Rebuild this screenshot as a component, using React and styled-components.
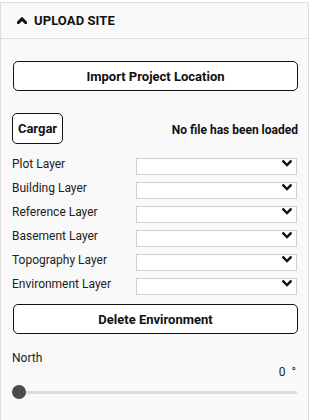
import React from 'react'
import styled, { createGlobalStyle } from 'styled-components'

const Global = createGlobalStyle`
  html, body { margin: 0; padding: 0; background: #fff; overflow: hidden; }
  body { font-family: Roboto, "Liberation Sans", Arial, sans-serif; color: #111; }
`

const layers = ['Plot Layer', 'Building Layer', 'Reference Layer', 'Basement Layer', 'Topography Layer', 'Environment Layer']

const Chevron = ({ up }) => (
  <svg width="10" height="7" viewBox="0 0 10 7">
    <path d={up ? 'M1.3 5.6 L5 1.9 L8.7 5.6' : 'M1.3 1.4 L5 5.1 L8.7 1.4'} fill="none" stroke="#111" strokeWidth={up ? 3 : 2.4} strokeLinecap="square" />
  </svg>
)

const App = () => {
  return (
    <>
      <Global />
      <Panel>
        <Header>
          <Chevron up />
          <span>UPLOAD SITE</span>
        </Header>
        <Body>
          <WideButton>Import Project Location</WideButton>
          <FileRow>
            <SmallButton>Cargar</SmallButton>
            <FileStatus>No file has been loaded</FileStatus>
          </FileRow>
          <Layers>
            {layers.map(l => (
              <LayerRow key={l}>
                <Label>{l}</Label>
                <SelectWrap>
                  <Select defaultValue="">
                    <option value=""></option>
                  </Select>
                  <Arrow><Chevron /></Arrow>
                </SelectWrap>
              </LayerRow>
            ))}
          </Layers>
          <WideButton>Delete Environment</WideButton>
          <North>
            <Label>North</Label>
            <Degrees>0 °</Degrees>
            <Slider>
              <Track />
              <Thumb />
            </Slider>
          </North>
        </Body>
      </Panel>
    </>
  )
}

export default App

const Panel = styled.div`
  margin-top: 2px;
  width: 307px;
  height: 418px;
  border: 1px solid #dedede;
  border-bottom: none;
  background: #f9f9f9;
`
const Header = styled.div`
  height: 35px;
  display: flex;
  align-items: center;
  gap: 7px;
  padding-left: 16px;
  border-bottom: 1px solid #dedede;
  font-size: 13px;
  font-weight: 700;
  letter-spacing: 0.1px;
`
const Body = styled.div`
  padding: 22px 10px 0 11px;
  display: flex;
  flex-direction: column;
`
const WideButton = styled.button`
  height: 30px;
  margin: 0 0 0 1px;
  border: 1px solid #111;
  border-radius: 5px;
  background: #fff;
  font-family: inherit;
  font-size: 13px;
  font-weight: 700;
  color: #111;
`
const FileRow = styled.div`
  display: flex;
  align-items: center;
  justify-content: space-between;
  margin-top: 22px;
`
const SmallButton = styled.button`
  width: 51px;
  height: 31px;
  padding: 0;
  border: 1px solid #111;
  border-radius: 5px;
  background: #fff;
  font-family: inherit;
  font-size: 13px;
  font-weight: 700;
  color: #111;
`
const FileStatus = styled.span`
  font-size: 12px;
  font-weight: 700;
  margin-top: 2px;
`
const Layers = styled.div`
  display: flex;
  flex-direction: column;
  gap: 7px;
  margin-top: 11px;
  margin-bottom: 12px;
`
const LayerRow = styled.div`
  display: flex;
  align-items: center;
  justify-content: space-between;
  height: 17px;
`
const Label = styled.span`
  font-size: 12px;
  color: #222;
`
const SelectWrap = styled.div`
  position: relative;
  width: 161px;
  height: 17px;
  margin-right: 1px;
`
const Select = styled.select`
  appearance: none;
  width: 100%;
  height: 100%;
  margin: 0;
  border: 1px solid #cfcfcf;
  border-radius: 0;
  background: #fff;
  font-family: inherit;
  font-size: 12px;
`
const Arrow = styled.span`
  position: absolute;
  right: 5px;
  top: 5px;
  display: flex;
  pointer-events: none;
`
const North = styled.div`
  display: flex;
  flex-direction: column;
  margin-top: 17px;
`
const Degrees = styled.span`
  align-self: flex-end;
  margin-right: 2px;
  font-size: 12px;
  color: #222;
  word-spacing: 3px;
`
const Slider = styled.div`
  position: relative;
  height: 14px;
  margin-top: 6px;
  margin-right: 1px;
`
const Track = styled.div`
  position: absolute;
  left: 7px;
  right: 0;
  top: 6px;
  height: 3px;
  background: #dcdcdc;
`
const Thumb = styled.div`
  position: absolute;
  left: 0;
  top: 0;
  width: 14px;
  height: 14px;
  border-radius: 50%;
  background: #4a4a4a;
`
